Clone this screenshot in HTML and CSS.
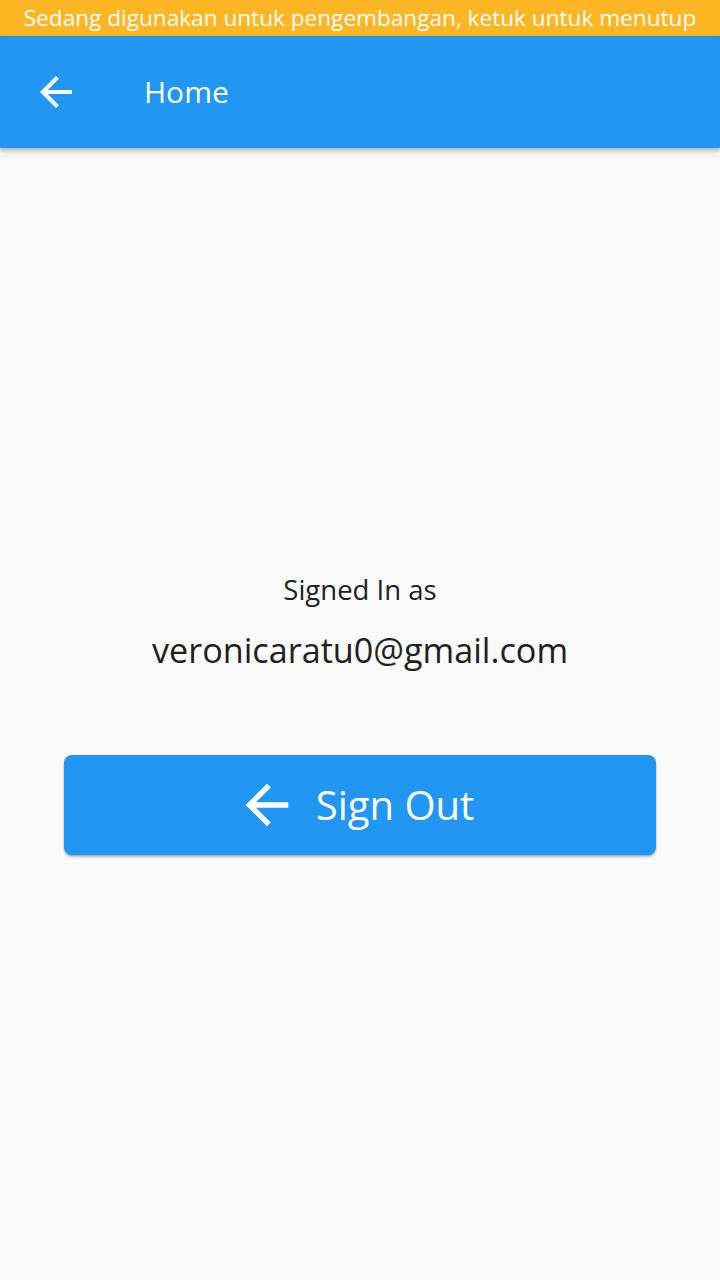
FILE: index.html
```html
<!DOCTYPE html>
<html lang="id">
<head>
<meta charset="utf-8">
<title>Home</title>
<link rel="stylesheet" href="styles.css">
</head>
<body>
<div class="banner">Sedang digunakan untuk pengembangan, ketuk untuk menutup</div>
<header class="appbar">
  <svg class="appbar-back" viewBox="0 0 24 24" aria-hidden="true"><path d="M20 11H7.83l5.59-5.59L12 4l-8 8 8 8 1.41-1.41L7.83 13H20v-2z"/></svg>
  <h1 class="appbar-title">Home</h1>
</header>
<main class="content">
  <p class="signed-label">Signed In as</p>
  <p class="signed-email">veronicaratu0@gmail.com</p>
  <button class="signout-btn" type="button">
    <svg class="signout-icon" viewBox="0 0 24 24" aria-hidden="true"><path d="M20 11H7.83l5.59-5.59L12 4l-8 8 8 8 1.41-1.41L7.83 13H20v-2z"/></svg>
    <span class="signout-text">Sign Out</span>
  </button>
</main>
</body>
</html>
```
FILE: styles.css
```css
* { box-sizing: border-box; }
html, body {
  margin: 0;
  padding: 0;
}
body {
  width: 720px;
  min-height: 1280px;
  background: #fafafa;
  font-family: "Open Sans", "Noto Sans", sans-serif;
  color: #212121;
}
.banner {
  height: 36px;
  background: #ffb624;
  color: #ffffff;
  font-size: 22.6px;
  line-height: 36px;
  text-align: center;
  white-space: nowrap;
  overflow: hidden;
}
.appbar {
  position: relative;
  z-index: 2;
  height: 112px;
  background: #2196f3;
  display: flex;
  align-items: center;
  padding-left: 32px;
  gap: 64px;
  box-shadow: 0 2px 4px rgba(0,0,0,0.22), 0 4px 8px rgba(0,0,0,0.12);
}
.appbar-back {
  width: 48px;
  height: 48px;
  fill: #ffffff;
  flex: none;
}
.appbar-title {
  margin: 0;
  font-size: 30px;
  line-height: 40px;
  font-weight: 400;
  color: #ffffff;
}
.content {
  display: flex;
  flex-direction: column;
  align-items: center;
  padding-top: 424px;
}
.signed-label {
  margin: 0;
  font-size: 27.5px;
  line-height: 36px;
}
.signed-email {
  margin: 20px 0 0;
  font-size: 34.2px;
  line-height: 44px;
}
.signout-btn {
  margin-top: 83px;
  width: 592px;
  height: 100px;
  border: none;
  border-radius: 8px;
  background: #2196f3;
  color: #ffffff;
  display: flex;
  align-items: center;
  justify-content: center;
  gap: 17px;
  padding: 0 11px 0 0;
  font-family: inherit;
  box-shadow: 0 2px 3px rgba(0,0,0,0.25), 0 1px 1px rgba(0,0,0,0.12);
}
.signout-icon {
  width: 64px;
  height: 64px;
  fill: #ffffff;
  flex: none;
}
.signout-text {
  font-size: 40px;
  line-height: 52px;
}
```
